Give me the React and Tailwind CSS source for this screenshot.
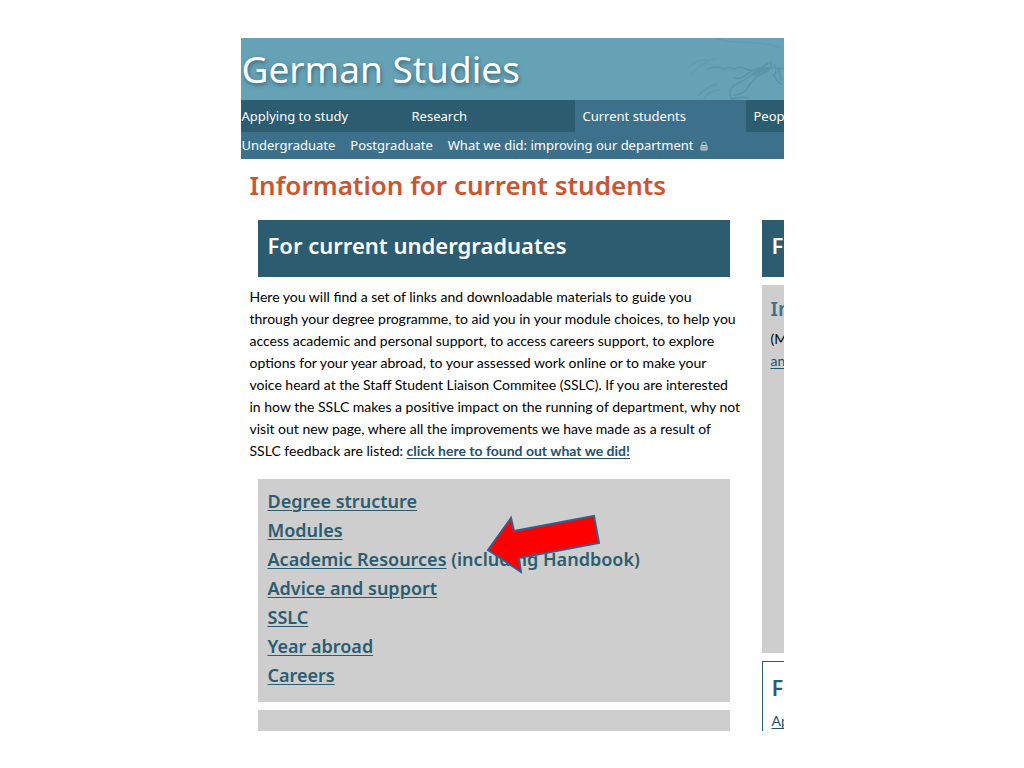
import React from 'react';

const resources = [
  { label: 'Degree structure' },
  { label: 'Modules' },
  { label: 'Academic Resources', note: ' (including Handbook)' },
  { label: 'Advice and support' },
  { label: 'SSLC' },
  { label: 'Year abroad' },
  { label: 'Careers' },
];

function Lock() {
  return (
    <svg viewBox="0 0 8 10" className="ml-[6px] h-[10px] w-2 shrink-0" aria-hidden="true">
      <path d="M2 5V2.5Q2 1 4 1T6 2.5V5" fill="none" stroke="#b9bfc3" strokeWidth="1" />
      <path d="M1 4.5h6V9H1z" fill="#8a979f" stroke="#c9cdd0" strokeWidth="1" />
      <path d="M2 6.7h4" stroke="#c9cdd0" strokeWidth=".8" />
    </svg>
  );
}

function Script() {
  return (
    <svg
      viewBox="0 0 110 62"
      className="absolute top-0 right-0 h-full w-[110px]"
      fill="none"
      stroke="#4a8ba1"
      strokeLinecap="round"
      strokeLinejoin="round"
      aria-hidden="true"
    >
      <g opacity=".5" strokeWidth="1.5">
        <path d="M25 57Q32 49 43 46M30 61Q36 52 45 52" opacity=".6" />
        <path d="M34 31Q42 27 50 31Q55 28 60 31Q66 28 72 31T84 30" />
        <path d="M42 0Q52 4 66 4T98 7L109 10" opacity=".35" />
        <path d="M58 61Q52 53 62 46Q72 42 80 35T97 24Q99 29 93 33L84 38Q76 45 72 52Q67 57 60 57" />
        <path d="M58 61Q66 58 74 60" />
        <path d="M81 36L87 31L93 32" strokeWidth="5" />
        <path d="M89 30Q97 29 109 31M100 27Q104 32 100 37Q102 43 107 46M104 30L107 42" />
        <path d="M60 40Q67 42 73 36L80 32" />
        <path d="M15 29Q25 20 33 22M18 35Q31 23 43 20" opacity=".3" />
      </g>
    </svg>
  );
}

function Arrow() {
  return (
    <svg
      viewBox="0 0 116 62"
      className="pointer-events-none absolute top-[34px] left-[228px] h-[62px] w-[116px]"
      aria-hidden="true"
    >
      <path
        d="M2 37L25 5L28 18L108 3L113 30L33 45L35 59Z"
        fill="#ff0000"
        stroke="#385d8a"
        strokeWidth="2"
      />
    </svg>
  );
}

export default function App() {
  return (
    <div className="bg-white px-4 pt-[38px] pb-9 font-['Lato','Liberation_Sans',sans-serif] text-black">
      <div className="mx-auto max-w-[543px] overflow-hidden">
        <header className="font-['Noto_Sans',sans-serif] text-white">
          <div className="relative flex h-[62px] items-center bg-[#66a2b5] pb-[2px] pl-px">
            <Script />
            <p className="relative text-[37px] leading-none whitespace-nowrap [text-shadow:1px_2px_4px_#34657a]">
              German Studies
            </p>
          </div>
          <nav aria-label="Department" className="bg-[#2b5c70] text-[13px] whitespace-nowrap">
            <div className="grid h-8 grid-cols-[163px_171px_171px_1fr] leading-8">
              <a href="#apply" className="pl-px">Applying to study</a>
              <a href="#research" className="pl-2">Research</a>
              <a href="#students" aria-current="page" className="bg-[#3d718b] pl-2">Current students</a>
              <a href="#people" className="min-w-0 overflow-hidden pl-2">People</a>
            </div>
            <div className="flex h-[27px] items-center gap-[15px] bg-[#3d718b] pl-px">
              <a href="#undergraduate">Undergraduate</a>
              <a href="#postgraduate">Postgraduate</a>
              <a href="#improving" className="flex items-center">
                What we did: improving our department
                <Lock />
              </a>
            </div>
          </nav>
        </header>

        <main className="pl-[9px]">
          <h1 className="pb-2 font-['Noto_Sans',sans-serif] text-[26px] leading-[53px] font-semibold whitespace-nowrap text-[#cc5530]">
            Information for current students
          </h1>
          <div className="flex gap-4">
            <section className="w-[488px] shrink-0">
              <h2 className="mx-2 h-[57px] bg-[#2b5c70] px-[10px] font-['Noto_Sans',sans-serif] text-[22px] leading-[50px] font-semibold text-white">
                For current undergraduates
              </h2>
              <p className="mt-[9px] text-[14px] leading-[22px] whitespace-nowrap">
                Here you will find a set of links and downloadable materials to guide you<br />
                through your degree programme, to aid you in your module choices, to help you<br />
                access academic and personal support, to access careers support, to explore<br />
                options for your year abroad, to your assessed work online or to make your<br />
                voice heard at the Staff Student Liaison Commitee (SSLC). If you are interested<br />
                in how the SSLC makes a positive impact on the running of department, why not<br />
                visit out new page, where all the improvements we have made as a result of<br />
                SSLC feedback are listed:{' '}
                <a href="#feedback" className="font-bold text-[#24506a] underline underline-offset-2">
                  click here to found out what we did!
                </a>
              </p>
              <div className="relative mx-2 mt-[17px] bg-[#cecece] px-[10px] pt-2 pb-3">
                <ul className="font-['Noto_Sans',sans-serif] text-[18px] leading-[29px] font-semibold text-[#2b5c70]">
                  {resources.map((item) => (
                    <li key={item.label}>
                      <a href="#resources" className="underline decoration-1 underline-offset-2">{item.label}</a>
                      {item.note}
                    </li>
                  ))}
                </ul>
                <Arrow />
              </div>
              <div className="mx-2 mt-2 h-[21px] bg-[#cecece]" />
            </section>

            <aside className="flex w-[488px] shrink-0 flex-col gap-2 pl-2">
              <h2 className="h-[57px] bg-[#2b5c70] px-[10px] font-['Noto_Sans',sans-serif] text-[22px] leading-[50px] font-semibold text-white">
                For
              </h2>
              <div className="h-[368px] bg-[#cecece] px-[9px] pt-[9px]">
                <h3 className="font-['Noto_Sans',sans-serif] text-[20px] leading-[30px] font-semibold text-[#3d718b]">In</h3>
                <p className="mt-1 text-[14px] leading-[22px]">
                  (MA<br />
                  <a href="#and" className="text-[#24506a] underline underline-offset-2">and</a>
                </p>
              </div>
              <div className="h-[70px] border-t border-l border-[#2b5c70] px-[9px] pt-[10px]">
                <h3 className="font-['Noto_Sans',sans-serif] text-[22px] leading-[30px] font-semibold text-[#2b5c70]">For</h3>
                <a href="#apply" className="mt-2 block text-[14px] leading-[22px] text-[#24506a] underline underline-offset-2">Apply</a>
              </div>
            </aside>
          </div>
        </main>
      </div>
    </div>
  );
}
